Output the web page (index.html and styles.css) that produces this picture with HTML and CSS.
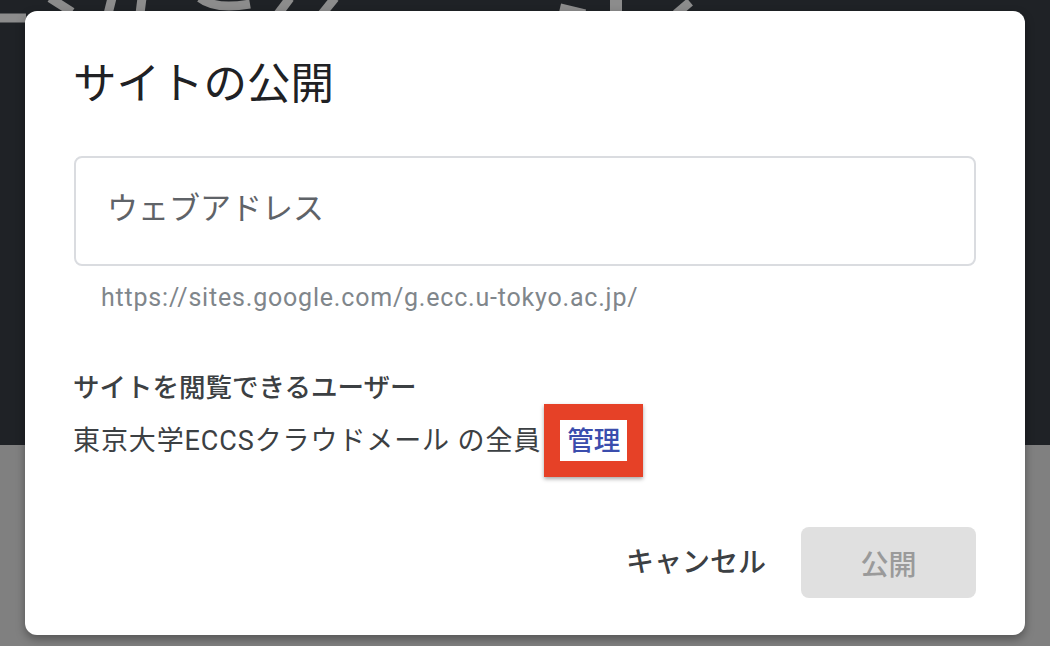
FILE: index.html
```html
<!DOCTYPE html>
<html lang="ja">
<head>
<meta charset="utf-8">
<link rel="stylesheet" href="styles.css">
</head>
<body>
<div class="backdrop">
  <div class="bg-top"></div>
  <div class="bg-bottom"></div>
  <svg class="bg-deco" width="1050" height="40" viewBox="0 0 1050 40">
    <g stroke="#8c8c8c" stroke-width="9" fill="none">
      <line x1="0" y1="18" x2="26" y2="18"/>
      <line x1="50" y1="-2" x2="72" y2="12"/>
      <line x1="112" y1="-2" x2="108" y2="14"/>
      <line x1="142" y1="-2" x2="140" y2="14"/>
      <path d="M200 -2 Q215 10 250 4"/>
      <line x1="290" y1="-2" x2="278" y2="14"/>
      <line x1="335" y1="-2" x2="322" y2="14"/>
      <line x1="560" y1="8" x2="585" y2="14"/>
      <line x1="690" y1="2" x2="676" y2="14"/>
    </g>
    <rect x="610" y="0" width="12" height="40" fill="#8c8c8c"/>
  </svg>
</div>
<div class="dialog">
  <h1 class="title">サイトの公開</h1>
  <div class="field">
    <span class="placeholder">ウェブアドレス</span>
  </div>
  <div class="url">https://sites.google.com/g.ecc.u-tokyo.ac.jp/</div>
  <div class="viewers">
    <div class="viewers-label">サイトを閲覧できるユーザー</div>
    <div class="viewers-row">
      <span class="viewers-text">東京大学ECCSクラウドメール の全員</span>
      <span class="highlight"><span class="manage">管理</span></span>
    </div>
  </div>
  <div class="actions">
    <button class="btn-cancel">キャンセル</button>
    <button class="btn-publish">公開</button>
  </div>
</div>
</body>
</html>
```

FILE: styles.css
```css
html, body {
  margin: 0;
  padding: 0;
  width: 1050px;
  height: 646px;
  overflow: hidden;
  font-family: Roboto, "Noto Sans CJK JP", sans-serif;
  background: #808080;
}
body {
  position: relative;
  padding-top: 11px;
  box-sizing: border-box;
}
.backdrop {
  position: absolute;
  inset: 0;
  z-index: 0;
}
.bg-top {
  height: 445px;
  background: #1f2226;
}
.bg-bottom {
  height: 201px;
  background: #808080;
}
.bg-deco {
  position: absolute;
  left: 0;
  top: 0;
}
.dialog {
  position: relative;
  z-index: 1;
  margin-left: 25px;
  width: 1000px;
  height: 624px;
  box-sizing: border-box;
  background: #fff;
  border-radius: 12px;
  box-shadow: 0 4px 10px rgba(0,0,0,0.35);
  padding: 0 49px;
  display: flex;
  flex-direction: column;
}
.title {
  margin: 44px 0 0 -1px;
  font-size: 43.5px;
  font-weight: 400;
  line-height: 60px;
  color: #202124;
}
.field {
  margin-top: 41px;
  height: 110px;
  box-sizing: border-box;
  border: 2px solid #dadce0;
  border-radius: 8px;
  display: flex;
  align-items: center;
  padding-left: 31px;
}
.placeholder {
  font-size: 31px;
  color: #5f6368;
  line-height: 40px;
  margin-top: -4px;
}
.url {
  margin-top: 14px;
  padding-left: 27px;
  font-size: 25px;
  letter-spacing: 0.8px;
  line-height: 36px;
  color: #80868b;
}
.viewers {
  margin-top: 54px;
}
.viewers-label {
  font-size: 26.5px;
  font-weight: 500;
  color: #3c4043;
  line-height: 36px;
  margin-left: -1px;
}
.viewers-row {
  display: flex;
  align-items: center;
  margin-top: -2px;
}
.viewers-text {
  font-size: 27px;
  letter-spacing: 0.9px;
  color: #3c4043;
  line-height: 36px;
  margin-left: -1px;
}
.highlight {
  display: flex;
  align-items: center;
  justify-content: center;
  width: 99px;
  height: 73px;
  box-sizing: border-box;
  border: 16px solid #e64127;
  margin-left: 3px;
  box-shadow: 0 2px 4px rgba(0,0,0,0.35);
  background: #fff;
}
.manage {
  font-size: 26.5px;
  font-weight: 500;
  color: #3b4dad;
  line-height: 36px;
}
.actions {
  margin-top: auto;
  margin-bottom: 37px;
  display: flex;
  justify-content: flex-end;
  align-items: center;
  gap: 35px;
}
button {
  font-family: Roboto, "Noto Sans CJK JP", sans-serif;
  border: none;
  cursor: pointer;
}
.btn-cancel {
  background: transparent;
  font-size: 28px;
  font-weight: 500;
  color: #3c4043;
  padding: 0;
  line-height: 71px;
}
.btn-publish {
  width: 175px;
  height: 71px;
  background: #e0e0e0;
  border-radius: 8px;
  font-size: 28px;
  font-weight: 500;
  color: #9a9a9a;
  padding: 0;
}
```
